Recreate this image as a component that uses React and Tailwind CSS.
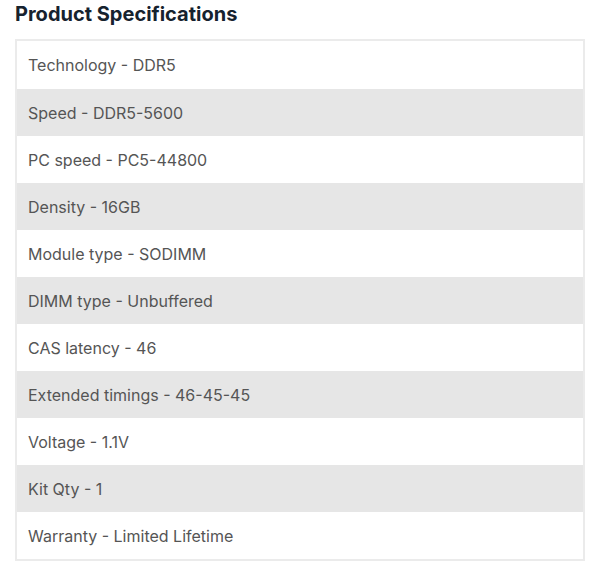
import React from "react";

const specs = [
  "Technology - DDR5",
  "Speed - DDR5-5600",
  "PC speed - PC5-44800",
  "Density - 16GB",
  "Module type - SODIMM",
  "DIMM type - Unbuffered",
  "CAS latency - 46",
  "Extended timings - 46-45-45",
  "Voltage - 1.1V",
  "Kit Qty - 1",
  "Warranty - Limited Lifetime",
];

const App = () => {
  return (
    <div className="bg-white w-[600px] h-[574px] px-[15px] pt-0 font-['Inter',sans-serif]">
      <h2 className="text-[20px] leading-[28px] font-bold text-[#16222e]">
        Product Specifications
      </h2>
      <div className="mt-[11px] border-2 border-[#ebebeb]">
        {specs.map((spec, i) => (
          <div
            key={spec}
            className={`flex items-center px-[11px] text-[16px] text-[#555555] ${
              i === 0 ? "h-[48px]" : "h-[47px]"
            } ${i % 2 === 1 ? "bg-[#e6e6e6]" : "bg-white"}`}
          >
            {spec}
          </div>
        ))}
      </div>
    </div>
  );
};

export default App;
